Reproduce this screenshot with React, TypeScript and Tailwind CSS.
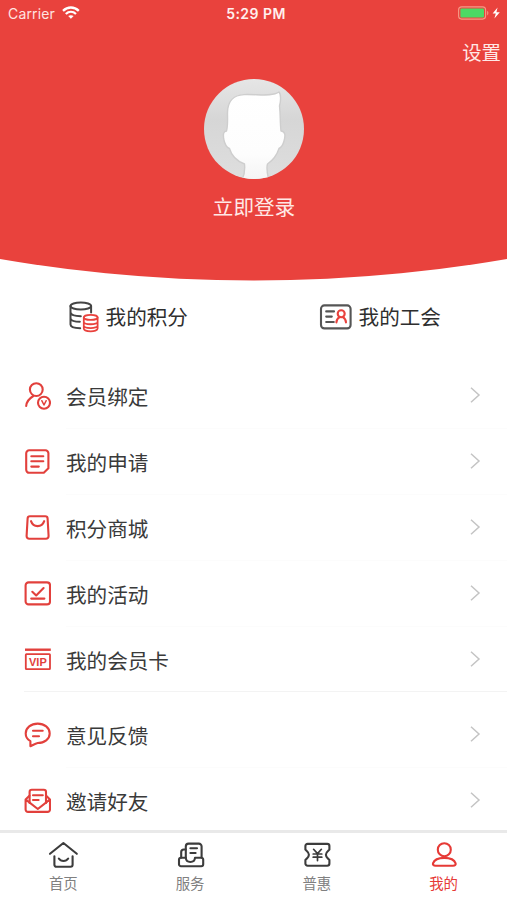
import React from 'react';

const RED = '#e9423d';

function Icon({ children, size = 28, color = '#e2403c', width = 2.1 }: {
  children: React.ReactNode;
  size?: number;
  color?: string;
  width?: number;
}) {
  return (
    <svg
      width={size}
      height={size}
      viewBox={`0 0 ${size} ${size}`}
      fill="none"
      stroke={color}
      strokeWidth={width}
      strokeLinecap="round"
      strokeLinejoin="round"
      className="shrink-0"
    >
      {children}
    </svg>
  );
}

const accountItems = [
  {
    label: '会员绑定',
    icon: (
      <Icon>
        <circle cx="13.3" cy="7.6" r="6.4" />
        <path d="M3.2 24C3.6 19.3 6.3 16.4 10.4 14" />
        <circle cx="21" cy="20.7" r="6" />
        <path d="M18.8 18.7L21 23l2.2-4.3" strokeWidth="1.5" />
      </Icon>
    ),
  },
  {
    label: '我的申请',
    icon: (
      <Icon>
        <path d="M6.2 2.3H22.4a3 3 0 0 1 3 3V20.3L20.8 24.8H6.2a3 3 0 0 1-3-3V5.3a3 3 0 0 1 3-3Z" />
        <path d="M8.3 8.2H20.3M8.3 13.2H20.3M8.3 18.6H15.8" />
      </Icon>
    ),
  },
  {
    label: '积分商城',
    icon: (
      <Icon>
        <path d="M7 2.3H22.2a2.4 2.4 0 0 1 2.4 2.3L25.6 22a2.6 2.6 0 0 1-2.6 2.7H6.2A2.6 2.6 0 0 1 3.6 22L4.6 4.6A2.4 2.4 0 0 1 7 2.3Z" />
        <path d="M8 7.2C10.2 13.8 19 13.8 21.2 7.2" />
      </Icon>
    ),
  },
  {
    label: '我的活动',
    icon: (
      <Icon>
        <rect x="2.6" y="2.4" width="24.4" height="22" rx="3" />
        <path d="M9.3 11.8L13.2 15.5 20.6 8M8.2 18.6H21.4" />
      </Icon>
    ),
  },
  {
    label: '我的会员卡',
    icon: (
      <Icon>
        <path d="M2 3.7H27.8" strokeLinecap="butt" strokeWidth="2.4" />
        <rect x="2.8" y="8.1" width="24.2" height="15" rx="0.6" strokeWidth="1.8" />
        <text
          x="14.9"
          y="19.5"
          textAnchor="middle"
          fontFamily="Liberation Sans, Arial, sans-serif"
          fontSize="11"
          fontWeight="700"
          fill="#e2403c"
          stroke="none"
        >
          VIP
        </text>
      </Icon>
    ),
  },
];

const supportItems = [
  {
    label: '意见反馈',
    icon: (
      <Icon>
        <path d="M7.4 25.2V20.2C4.4 18.4 2.7 15.6 2.7 12.4 2.7 6.8 8 2.6 14.7 2.6S26.7 6.8 26.7 12.4 21.4 22 14.7 22C12 22.6 9.8 24.2 7.4 25.2Z" />
        <path d="M10 9.7H19.7M10 15.2H16" />
      </Icon>
    ),
  },
  {
    label: '邀请好友',
    icon: (
      <Icon>
        <path d="M6.6 16V5a2.2 2.2 0 0 1 2.2-2.2H20.8A2.2 2.2 0 0 1 23 5V16" />
        <path d="M6.4 8.8L2.6 12.4V22.5A2.4 2.4 0 0 0 5 24.9H24.6a2.4 2.4 0 0 0 2.4-2.4V12.4L23.2 8.8M2.8 12.6L14.8 22 26.8 12.6" />
        <path d="M10 8.2H19.8M10 13H15.6" />
      </Icon>
    ),
  },
];

const DARK = '#3c3c3c';

const tabs = [
  {
    label: '首页',
    icon: (
      <Icon size={32} color={DARK}>
        <path d="M3 14.8L16.4 4 29.8 14.8M7.4 17.3V25.8a2 2 0 0 0 2 2H23.6a2 2 0 0 0 2-2V17.3M11.8 19.5C14 22.8 19 22.8 21.2 19.5" />
      </Icon>
    ),
  },
  {
    label: '服务',
    icon: (
      <Icon size={32} color={DARK}>
        <path d="M11.8 18.8V7.4A2.8 2.8 0 0 1 14.6 4.6H24.8A2.8 2.8 0 0 1 27.6 7.4V18.6" />
        <path d="M11.6 10.5H9.8A2.6 2.6 0 0 0 7.2 13.1V18.6" />
        <path d="M7 18.8H11.8C12.2 24.4 20.6 24.4 21 18.8H27.4A1.8 1.8 0 0 1 29.2 20.6V25.2A2 2 0 0 1 27.2 27.2H7A2 2 0 0 1 5 25.2V20.8A2 2 0 0 1 7 18.8Z" />
        <path d="M16.4 9.3H23M16.4 14H21.6" />
      </Icon>
    ),
  },
  {
    label: '普惠',
    icon: (
      <Icon size={32} color={DARK}>
        <path d="M6.6 4.9H26.2A2.2 2.2 0 0 1 28.4 7.1V10.6L27 12C24.2 14.4 24.2 17.2 27 19.6L28.4 21V24.5A2.2 2.2 0 0 1 26.2 26.7H6.6A2.2 2.2 0 0 1 4.4 24.5V21L5.8 19.6C8.6 17.2 8.6 14.4 5.8 12L4.4 10.6V7.1A2.2 2.2 0 0 1 6.6 4.9Z" />
        <path d="M12.6 10.3L16.5 14.6 20.4 10.3M16.5 14.6V21.6M12.2 15H20.8M12.2 18.2H20.8" strokeWidth="1.7" />
      </Icon>
    ),
  },
  {
    label: '我的',
    active: true,
    icon: (
      <Icon size={32} color="#e63a36">
        <circle cx="16.3" cy="10.7" r="6.5" />
        <path d="M7.6 26.7C5.4 26.7 4.6 25.8 5 24.4 6.2 20.8 10.8 18.9 16.3 18.9S26.4 20.8 27.6 24.4C28 25.8 27.2 26.7 25 26.7Z" />
      </Icon>
    ),
  },
];

function StatusBar() {
  return (
    <div className="grid h-7 grid-cols-3 items-center pb-[2px] pl-2 pr-[6px] font-['Inter',sans-serif] text-[14px] text-[#ffe4e1]">
      <div className="flex items-center gap-[7px]">
        <span className="tracking-[0.15px]">Carrier</span>
        <svg width="18" height="14" viewBox="0 0 18 14" fill="none" stroke="#fff" strokeWidth="2.3">
          <path d="M1 4.8C5.6 .4 12.2 .4 16.8 4.8" />
          <path d="M3.8 8C6.8 5.2 11 5.2 14 8" />
          <path d="M8.9 12.8L6.2 10.1C7.8 8.8 10 8.8 11.6 10.1Z" fill="#fff" stroke="none" />
        </svg>
      </div>
      <span className="pl-[3px] text-center text-[14px] font-semibold tracking-[0.45px] text-[#fff0ee]">5:29 PM</span>
      <svg width="44" height="14" viewBox="0 0 44 14" className="justify-self-end">
        <rect x="1.6" y="0.9" width="27" height="12.2" rx="3" fill="none" stroke="#f59a86" strokeWidth="1.1" />
        <rect x="3.4" y="2.6" width="23.6" height="8.8" rx="1" fill="#4cd964" />
        <path d="M30.2 4.8C31.8 5.6 31.8 8.6 30.2 9.4Z" fill="#f59a86" />
        <path d="M40.6 1.4L35.6 7.6H38.8L37.4 12.6 42.8 6.2H39.4Z" fill="#fff" />
      </svg>
    </div>
  );
}

function Avatar() {
  return (
    <svg width="100" height="100" viewBox="0 0 100 100" className="rounded-full">
      <defs>
        <linearGradient id="ring" x1="0" y1="0" x2="0" y2="1">
          <stop offset="0" stopColor="#e6e6e6" />
          <stop offset="0.4" stopColor="#d6d6d6" />
          <stop offset="1" stopColor="#dedede" />
        </linearGradient>
        <linearGradient id="face" x1="0" y1="0" x2="0" y2="1">
          <stop offset="0" stopColor="#fff" />
          <stop offset="0.7" stopColor="#fdfdfd" />
          <stop offset="1" stopColor="#f4f4f4" />
        </linearGradient>
      </defs>
      <rect width="100" height="100" fill="url(#ring)" />
      <path
        d="M22.5 52C24 47 23.5 40 23.5 34C23.5 22 30 16 40 15.6C53 15 68 18 75 13C77 15 77 22 75.5 27C76.5 35 76 44 77 52C81.5 52 81.5 57 80 62C79 66 77 68.5 75 69.5C73 76 68.5 81.5 63.5 85C62.5 88 63 94 65 102H37C40.5 97 41 90 40.5 85C33 82 27.5 77 25.5 69.5C22 68.5 20.5 64 19.7 60C19 55 19.5 52 22.5 52Z"
        fill="url(#face)"
        stroke="#cecece"
        strokeWidth="1.4"
        strokeLinejoin="round"
      />
    </svg>
  );
}

function MenuRow({ label, icon, divider }: { label: string; icon: React.ReactNode; divider?: boolean }) {
  return (
    <div className="flex h-[66px] items-center pl-[23px] pr-[26px]">
      {icon}
      <div
        className={`-mr-[26px] ml-[15px] flex h-full flex-1 items-center justify-between border-b pr-[26px] ${
          divider ? 'border-[#fcfcfc]' : 'border-transparent'
        }`}
      >
        <span className="pt-px text-[20.6px] leading-none text-[#3a3a3a]">{label}</span>
        <svg width="12" height="16" viewBox="0 0 12 16" fill="none" stroke="#c4c4c4" strokeWidth="1.5" className="mb-px">
          <path d="M2 0.8L10 8L2 15.2" />
        </svg>
      </div>
    </div>
  );
}

export default function App() {
  return (
    <div className="flex h-[900px] w-[507px] flex-col overflow-hidden bg-white font-['Noto_Sans_CJK_SC',sans-serif]">
      <header
        className="h-[281px] shrink-0 [clip-path:circle(1505px_at_50%_-1224.5px)]"
        style={{ backgroundColor: RED }}
      >
        <StatusBar />
        <div className="flex h-[51px] items-center justify-end pb-[4px] pr-[6px] text-[19.4px] leading-none text-[#ffe8e6]">
          <span>设置</span>
        </div>
        <div className="flex flex-col items-center">
          <Avatar />
          <span className="mt-[17px] pl-px text-[20.6px] leading-none text-[#ffe8e6]">立即登录</span>
        </div>
      </header>

      <section className="grid h-[82px] shrink-0 grid-cols-2 pb-[10px] text-[20.6px] leading-none text-[#2e2e2e]">
        <div className="flex items-center justify-center gap-[6px] pl-[2px]">
          <Icon size={32} color="#444" width={2}>
            <ellipse cx="12.8" cy="5" rx="10.3" ry="3.5" />
            <path d="M2.5 5V23.4C2.5 25.6 6.4 27 12.2 27.2M23.1 5V11.6M2.5 11.4C3 14 7.6 15.2 12.8 15.2M2.5 17.6C3.4 19.8 7 20.8 11.8 20.8" />
            <g stroke={RED} strokeWidth="1.8">
              <ellipse cx="22.7" cy="16.4" rx="6.9" ry="2.5" />
              <path d="M15.8 16.4V27.6C15.8 31.2 29.6 31.2 29.6 27.6V16.4M15.8 21C15.8 24 29.6 24 29.6 21M15.8 24.8C15.8 27.8 29.6 27.8 29.6 24.8" />
            </g>
          </Icon>
          <span className="pb-[2px]">我的积分</span>
        </div>
        <div className="flex items-center justify-center gap-[6px] pr-px">
          <svg width="34" height="32" viewBox="0 0 34 32" fill="none" stroke="#555" strokeWidth="2.1" strokeLinecap="round">
            <rect x="2" y="4.4" width="29.6" height="23" rx="3.4" />
            <path d="M7.2 10.4H15M7.2 15.6H12.8M7.2 21H14.8" />
            <g stroke={RED}>
              <circle cx="22.2" cy="12.8" r="3.5" />
              <path d="M17.4 21.4C17.6 18.6 18.8 17.2 20.6 16.2M27 21.4C26.8 18.6 25.6 17.2 23.8 16.2" />
            </g>
          </svg>
          <span className="pb-[2px]">我的工会</span>
        </div>
      </section>

      <main className="min-h-0 flex-1 overflow-hidden">
        <div>
          {accountItems.map((item, idx) => (
            <MenuRow key={item.label} {...item} divider={idx < accountItems.length - 1} />
          ))}
        </div>
        <div className="-mt-[2px] ml-6 h-px bg-[#f3f3f3]" />
        <div className="mt-[10px]">
          {supportItems.map((item) => (
            <MenuRow key={item.label} {...item} divider />
          ))}
        </div>
      </main>

      <nav className="grid h-[70px] shrink-0 grid-cols-4 border-t-[3px] border-[#e9e9e9] bg-white pt-[6px]">
        {tabs.map((tab) => (
          <div key={tab.label} className="flex flex-col items-center">
            {tab.icon}
            <span
              className={`mt-[5px] text-[14.4px] leading-none ${tab.active ? 'text-[#e63a36]' : 'text-[#808080]'}`}
            >
              {tab.label}
            </span>
          </div>
        ))}
      </nav>
    </div>
  );
}
